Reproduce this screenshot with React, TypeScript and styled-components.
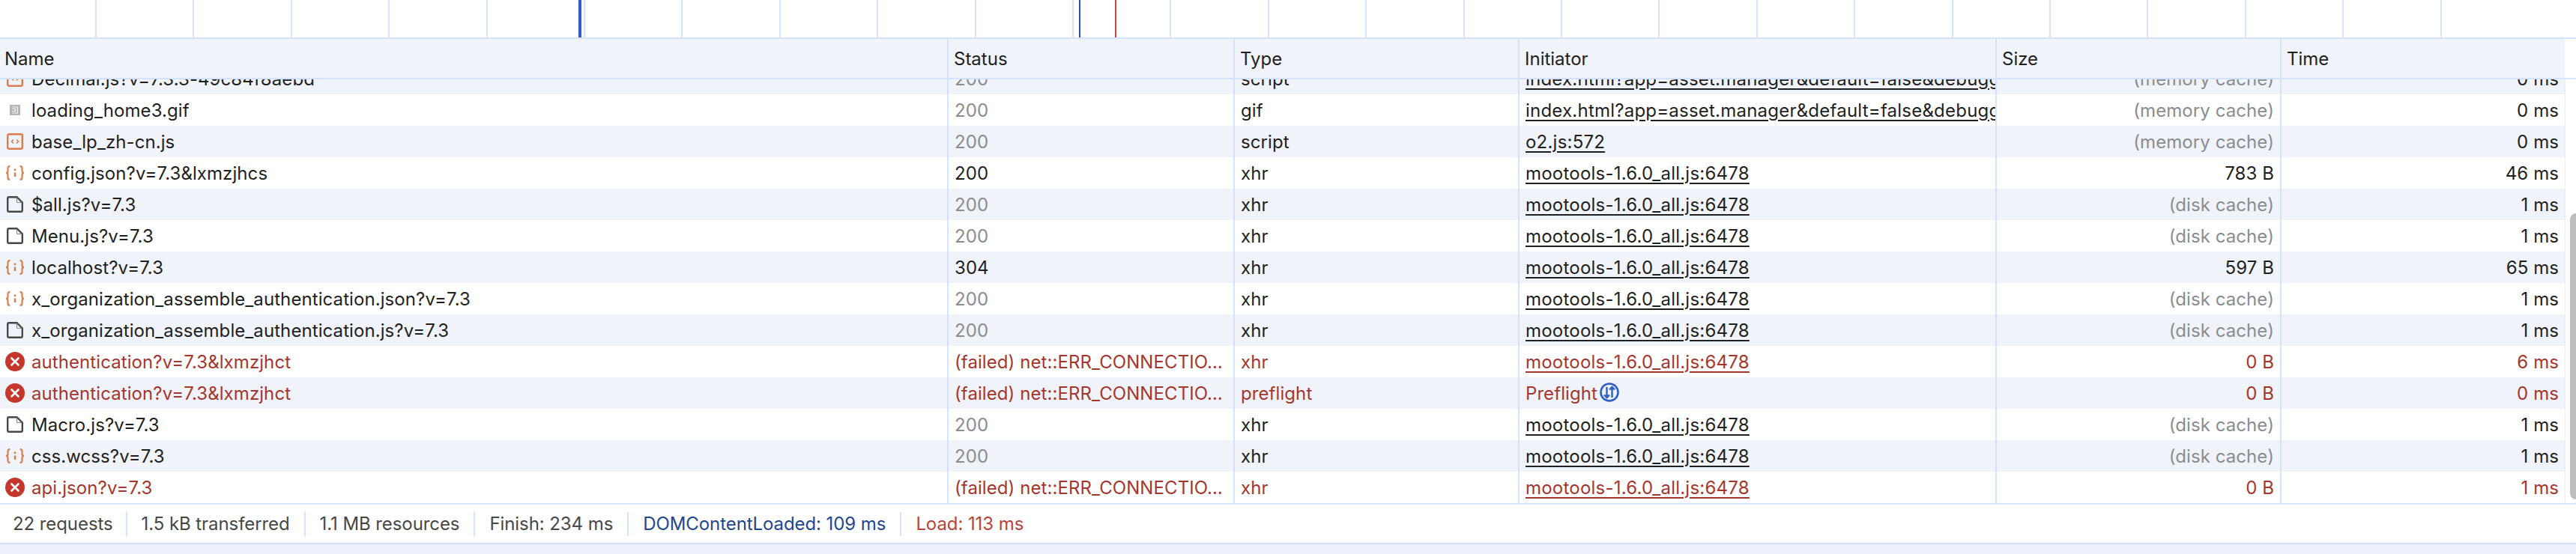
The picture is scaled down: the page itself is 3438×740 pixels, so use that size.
import React from "react";
import styled, { createGlobalStyle, css } from "styled-components";

const GlobalStyle = createGlobalStyle`
  html, body {
    margin: 0;
    padding: 0;
    background: #fff;
  }
  body {
    font-family: Inter, "Liberation Sans", sans-serif;
    font-size: 24px;
    color: #1f1f1f;
  }
`;

const borderColor = "#d3e3fd";
const zebra = "#f0f3f9";
const errorRed = "#a5362d";
const muted = "#8b8c8f";
const columns = "1264px 382px 380px 637px 380px 380px 15px";

const Page = styled.div`
  width: 3438px;
  height: 740px;
  overflow: hidden;
  display: flex;
  flex-direction: column;
`;

const Overview = styled.div`
  position: relative;
  height: 50px;
  flex: none;
  background: #fff;
`;

const Tick = styled.span`
  position: absolute;
  top: 0;
  bottom: 0;
  width: 2px;
  background: ${borderColor};
`;

const Marker = styled.span<{ $color: string; $wide?: boolean }>`
  position: absolute;
  top: 0;
  bottom: 0;
  width: ${(p) => (p.$wide ? 4 : 2)}px;
  background: ${(p) => p.$color};
`;

const HeaderRow = styled.div`
  display: grid;
  grid-template-columns: ${columns};
  height: 56px;
  flex: none;
  box-sizing: border-box;
  background: ${zebra};
  border-top: 2px solid ${borderColor};
  border-bottom: 2px solid ${borderColor};
`;

const HeaderCell = styled.div<{ $first?: boolean }>`
  display: flex;
  align-items: center;
  box-sizing: border-box;
  padding: 0 7px;
  ${(p) => (p.$first ? css`padding-left: 6px;` : css`border-left: 2px solid ${borderColor};`)}
`;

const HeaderGap = styled.div`
  background: #fff;
`;

const Body = styled.div`
  position: relative;
  height: 566px;
  flex: none;
  overflow: hidden;
`;

const Rows = styled.div`
  margin-top: -22px;
`;

const Row = styled.div<{ $odd: boolean; $error?: boolean }>`
  display: grid;
  grid-template-columns: ${columns};
  height: 42px;
  letter-spacing: 0.08px;
  color: ${(p) => (p.$error ? errorRed : "#1f1f1f")};
  background: ${(p) => (p.$odd ? zebra : "#fff")};
`;

const Cell = styled.div<{ $first?: boolean; $right?: boolean; $muted?: boolean }>`
  display: flex;
  align-items: center;
  box-sizing: border-box;
  padding: 0 8px;
  overflow: hidden;
  white-space: nowrap;
  ${(p) => p.$right && css`justify-content: flex-end;`}
  ${(p) => p.$muted && css`color: ${muted};`}
  ${(p) => !p.$first && css`border-left: 2px solid ${borderColor};`}
`;

const RowGap = styled.div`
  background: #fff;
  border-left: 1px solid #e6edfb;
`;

const IconSlot = styled.span`
  flex: none;
  width: 28px;
  height: 28px;
  margin-left: -2px;
  margin-right: 8px;
  display: flex;
  align-items: center;
  justify-content: center;
`;

const Clip = styled.span`
  overflow: hidden;
  text-overflow: ellipsis;
`;

const Link = styled.span`
  text-decoration: underline;
  text-underline-offset: 4px;
  letter-spacing: 0.22px;
`;

const PreflightBadge = styled.svg`
  margin-left: 3px;
  margin-top: -2px;
  flex: none;
`;

const Thumb = styled.div`
  position: absolute;
  top: 179px;
  bottom: 5px;
  right: 0;
  width: 8px;
  border-radius: 8px 0 0 8px;
  background: #bdbdbd;
`;

const Footer = styled.div`
  height: 55px;
  flex: none;
  box-sizing: border-box;
  display: flex;
  align-items: center;
  background: #fff;
  border-top: 2px solid ${borderColor};
  border-bottom: 2px solid ${borderColor};
  color: #474747;
  letter-spacing: -0.08px;
`;

const Stat = styled.div<{ $color?: string }>`
  display: flex;
  align-items: center;
  height: 32px;
  padding: 0 19px;
  border-right: 2px solid ${borderColor};
  color: ${(p) => p.$color ?? "inherit"};
  &:first-child {
    padding-left: 17px;
    padding-right: 17px;
  }
  &:last-child {
    border-right: none;
  }
`;

const Rest = styled.div`
  flex: 1;
  background: #ebf0fb;
`;

type IconKind = "script" | "gif" | "json" | "doc" | "error";

const Icon = ({ kind }: { kind: IconKind }) => {
  if (kind === "script") {
    return (
      <svg width="22" height="22" viewBox="0 0 22 22" fill="none">
        <rect x="1.2" y="1.2" width="19.6" height="19.6" rx="2" stroke="#db7c50" strokeWidth="2.4" />
        <path d="M9 8.5 6.500 11 9 13.500M13 8.500l2.500 2.500-2.500 2.500" stroke="#db7c50" strokeWidth="1.600" />
      </svg>
    );
  }
  if (kind === "gif") {
    return (
      <svg width="14" height="14" viewBox="0 0 14 14" fill="none">
        <rect width="14" height="14" fill="#b5b5b5" />
        <path d="M3 3h7.500v8H3M3 5.500h4.500v3H3" stroke="#f4f4f4" strokeWidth="1.200" />
      </svg>
    );
  }
  if (kind === "json") {
    return (
      <svg width="26" height="20" viewBox="0 0 26 20" fill="none">
        <path
          d="M6.500 1C3.800 1 3.500 2.300 3.500 4v3.200c0 1.600-.8 2.800-2.500 2.800 1.700 0 2.500 1.200 2.500 2.800V16c0 1.700.3 3 3 3M19.500 1c2.700 0 3 1.300 3 3v3.200c0 1.600.8 2.800 2.500 2.800-1.700 0-2.500 1.200-2.500 2.800V16c0 1.700-.3 3-3 3"
          stroke="#d9804f"
          strokeWidth="2.200"
        />
        <path d="M13 9.500v5.500" stroke="#d9804f" strokeWidth="2.400" />
        <circle cx="13" cy="5.800" r="1.500" fill="#d9804f" />
      </svg>
    );
  }
  if (kind === "doc") {
    return (
      <svg width="22" height="22" viewBox="0 0 22 22" fill="none">
        <path
          d="M1.200 3a1.800 1.800 0 0 1 1.800-1.800h10.500l7.300 7.300V19a1.800 1.800 0 0 1-1.800 1.800H3A1.800 1.800 0 0 1 1.200 19z"
          stroke="#474747"
          strokeWidth="2.400"
        />
        <path d="M13.500 2v5.500a1 1 0 0 0 1 1H20" stroke="#8a8a8a" strokeWidth="1.200" />
      </svg>
    );
  }
  return (
    <svg width="26" height="26" viewBox="0 0 26 26" fill="none">
      <circle cx="13" cy="13" r="13" fill="#c5372c" />
      <path d="m8.500 8.500 9 9M17.500 8.500l-9 9" stroke="#fff" strokeWidth="2.600" strokeLinecap="round" />
    </svg>
  );
};

const PreflightIcon = () => (
  <PreflightBadge width="26" height="26" viewBox="0 0 26 26" fill="none">
    <circle cx="13" cy="13" r="11.500" stroke="#2a5fc9" strokeWidth="2.600" />
    <path d="M9.500 6v14M6 16.500 9.500 20l3.500-3.500M16.500 20V6M13 9.500 16.500 6 20 9.500" stroke="#2a5fc9" strokeWidth="2.400" />
  </PreflightBadge>
);

interface IRequest {
  name: string;
  icon: IconKind;
  status: string;
  statusActive?: boolean;
  type: string;
  initiator: string;
  preflight?: boolean;
  size: string;
  sizeMuted?: boolean;
  time: string;
  error?: boolean;
}

const mootools = "mootools-1.6.0_all.js:6478";
const indexUrl = "index.html?app=asset.manager&default=false&debugger&lp=zh-cn";
const failed = "(failed) net::ERR_CONNECTIO…";

const requests: IRequest[] = [
  { name: "Decimal.js?v=7.3.3-49c84f8aebd", icon: "script", status: "200", type: "script", initiator: indexUrl, size: "(memory cache)", sizeMuted: true, time: "0 ms" },
  { name: "loading_home3.gif", icon: "gif", status: "200", type: "gif", initiator: indexUrl, size: "(memory cache)", sizeMuted: true, time: "0 ms" },
  { name: "base_lp_zh-cn.js", icon: "script", status: "200", type: "script", initiator: "o2.js:572", size: "(memory cache)", sizeMuted: true, time: "0 ms" },
  { name: "config.json?v=7.3&lxmzjhcs", icon: "json", status: "200", statusActive: true, type: "xhr", initiator: mootools, size: "783 B", time: "46 ms" },
  { name: "$all.js?v=7.3", icon: "doc", status: "200", type: "xhr", initiator: mootools, size: "(disk cache)", sizeMuted: true, time: "1 ms" },
  { name: "Menu.js?v=7.3", icon: "doc", status: "200", type: "xhr", initiator: mootools, size: "(disk cache)", sizeMuted: true, time: "1 ms" },
  { name: "localhost?v=7.3", icon: "json", status: "304", statusActive: true, type: "xhr", initiator: mootools, size: "597 B", time: "65 ms" },
  { name: "x_organization_assemble_authentication.json?v=7.3", icon: "json", status: "200", type: "xhr", initiator: mootools, size: "(disk cache)", sizeMuted: true, time: "1 ms" },
  { name: "x_organization_assemble_authentication.js?v=7.3", icon: "doc", status: "200", type: "xhr", initiator: mootools, size: "(disk cache)", sizeMuted: true, time: "1 ms" },
  { name: "authentication?v=7.3&lxmzjhct", icon: "error", status: failed, type: "xhr", initiator: mootools, size: "0 B", time: "6 ms", error: true },
  { name: "authentication?v=7.3&lxmzjhct", icon: "error", status: failed, type: "preflight", initiator: "Preflight", preflight: true, size: "0 B", time: "0 ms", error: true },
  { name: "Macro.js?v=7.3", icon: "doc", status: "200", type: "xhr", initiator: mootools, size: "(disk cache)", sizeMuted: true, time: "1 ms" },
  { name: "css.wcss?v=7.3", icon: "json", status: "200", type: "xhr", initiator: mootools, size: "(disk cache)", sizeMuted: true, time: "1 ms" },
  { name: "api.json?v=7.3", icon: "error", status: failed, type: "xhr", initiator: mootools, size: "0 B", time: "1 ms", error: true },
];

const ticks = Array.from({ length: 25 }, (_, i) => Math.round(127 + i * 130.4));

const App = () => {
  return (
    <Page>
      <GlobalStyle />
      <Overview>
        {ticks.map((x) => (
          <Tick key={x} style={{ left: x }} />
        ))}
        <Marker $color="#2a5fc9" $wide style={{ left: 772 }} />
        <Marker $color="#2a4fb0" style={{ left: 1440 }} />
        <Marker $color="#c9483f" style={{ left: 1488 }} />
      </Overview>
      <HeaderRow>
        <HeaderCell $first>Name</HeaderCell>
        <HeaderCell>Status</HeaderCell>
        <HeaderCell>Type</HeaderCell>
        <HeaderCell>Initiator</HeaderCell>
        <HeaderCell>Size</HeaderCell>
        <HeaderCell>Time</HeaderCell>
        <HeaderGap />
      </HeaderRow>
      <Body>
        <Rows>
          {requests.map((r, i) => (
            <Row key={i} $odd={i % 2 === 0} $error={r.error}>
              <Cell $first>
                <IconSlot>
                  <Icon kind={r.icon} />
                </IconSlot>
                <Clip>{r.name}</Clip>
              </Cell>
              <Cell $muted={!r.error && !r.statusActive}>
                <Clip>{r.status}</Clip>
              </Cell>
              <Cell>{r.type}</Cell>
              <Cell>
                {r.preflight ? (
                  <>
                    {r.initiator}
                    <PreflightIcon />
                  </>
                ) : (
                  <Link>{r.initiator}</Link>
                )}
              </Cell>
              <Cell $right $muted={r.sizeMuted}>
                {r.size}
              </Cell>
              <Cell $right>{r.time}</Cell>
              <RowGap />
            </Row>
          ))}
        </Rows>
        <Thumb />
      </Body>
      <Footer>
        <Stat>22 requests</Stat>
        <Stat>1.5 kB transferred</Stat>
        <Stat>1.1 MB resources</Stat>
        <Stat>Finish: 234 ms</Stat>
        <Stat $color="#1f4690">DOMContentLoaded: 109 ms</Stat>
        <Stat $color="#b8443a">Load: 113 ms</Stat>
      </Footer>
      <Rest />
    </Page>
  );
};

export default App;
